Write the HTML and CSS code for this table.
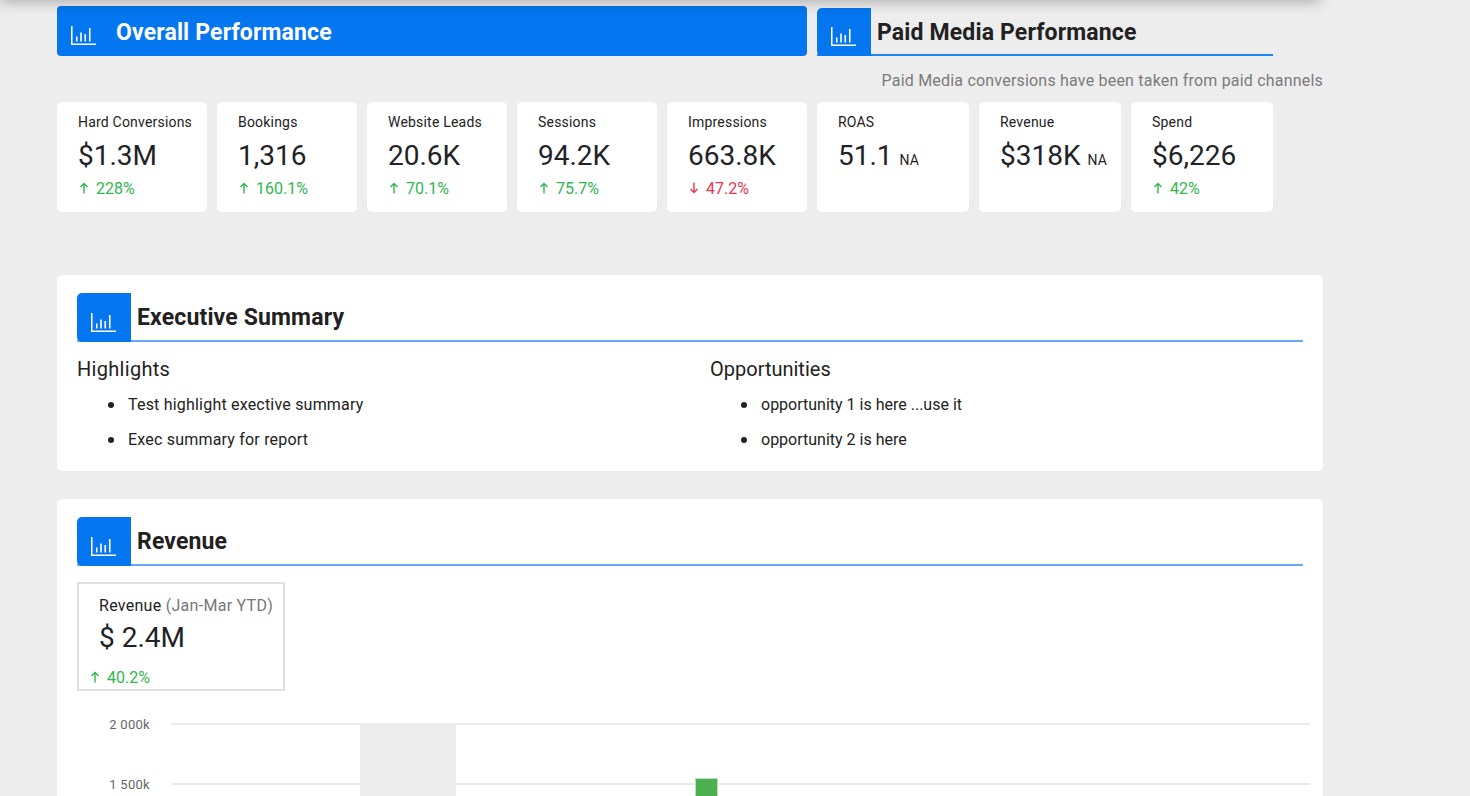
FILE: index.html
```html
<!DOCTYPE html>
<html lang="en">
<head>
<meta charset="utf-8">
<title>Performance Report</title>
<link rel="stylesheet" href="styles.css">
</head>
<body>
<div class="top-shadow"></div>
<main class="page">
  <section class="top-row">
    <div class="col overall">
      <div class="banner">
        <svg class="chart-icon" viewBox="0 0 25 19" width="25" height="19"><path d="M0.75 0v18.25H25M5.75 15.5V10.5M10 15.5V6.5M14.25 15.5V8M18.75 15.5V2" fill="none" stroke="currentColor" stroke-width="1.6"/></svg>
        <h2 class="banner-title">Overall Performance</h2>
      </div>
      <div class="kpis kpis-overall">
        <div class="kpi">
          <div class="kpi-label">Hard Conversions</div>
          <div class="kpi-value">$1.3M</div>
          <div class="kpi-change up"><svg class="arrow" viewBox="0 0 10 12" width="10" height="12"><path d="M5 11.5V1.5M1.5 5L5 1.5 8.5 5" fill="none" stroke="currentColor" stroke-width="1.4"/></svg>228%</div>
        </div>
        <div class="kpi">
          <div class="kpi-label">Bookings</div>
          <div class="kpi-value">1,316</div>
          <div class="kpi-change up"><svg class="arrow" viewBox="0 0 10 12" width="10" height="12"><path d="M5 11.5V1.5M1.5 5L5 1.5 8.5 5" fill="none" stroke="currentColor" stroke-width="1.4"/></svg>160.1%</div>
        </div>
        <div class="kpi">
          <div class="kpi-label">Website Leads</div>
          <div class="kpi-value">20.6K</div>
          <div class="kpi-change up"><svg class="arrow" viewBox="0 0 10 12" width="10" height="12"><path d="M5 11.5V1.5M1.5 5L5 1.5 8.5 5" fill="none" stroke="currentColor" stroke-width="1.4"/></svg>70.1%</div>
        </div>
        <div class="kpi">
          <div class="kpi-label">Sessions</div>
          <div class="kpi-value">94.2K</div>
          <div class="kpi-change up"><svg class="arrow" viewBox="0 0 10 12" width="10" height="12"><path d="M5 11.5V1.5M1.5 5L5 1.5 8.5 5" fill="none" stroke="currentColor" stroke-width="1.4"/></svg>75.7%</div>
        </div>
        <div class="kpi">
          <div class="kpi-label">Impressions</div>
          <div class="kpi-value">663.8K</div>
          <div class="kpi-change down"><svg class="arrow" viewBox="0 0 10 12" width="10" height="12"><path d="M5 0.5V10.5M1.5 7L5 10.5 8.5 7" fill="none" stroke="currentColor" stroke-width="1.4"/></svg>47.2%</div>
        </div>
      </div>
    </div>
    <div class="col paid">
      <div class="sec-head sec-head-paid">
        <div class="icon-box"><svg class="chart-icon" viewBox="0 0 25 19" width="25" height="19"><path d="M0.75 0v18.25H25M5.75 15.5V10.5M10 15.5V6.5M14.25 15.5V8M18.75 15.5V2" fill="none" stroke="currentColor" stroke-width="1.6"/></svg></div>
        <h2 class="sec-title">Paid Media Performance</h2>
      </div>
      <p class="note">Paid Media conversions have been taken from paid channels</p>
      <div class="kpis kpis-paid">
        <div class="kpi">
          <div class="kpi-label">ROAS</div>
          <div class="kpi-value">51.1<span class="na">NA</span></div>
        </div>
        <div class="kpi">
          <div class="kpi-label">Revenue</div>
          <div class="kpi-value">$318K<span class="na">NA</span></div>
        </div>
        <div class="kpi">
          <div class="kpi-label">Spend</div>
          <div class="kpi-value">$6,226</div>
          <div class="kpi-change up"><svg class="arrow" viewBox="0 0 10 12" width="10" height="12"><path d="M5 11.5V1.5M1.5 5L5 1.5 8.5 5" fill="none" stroke="currentColor" stroke-width="1.4"/></svg>42%</div>
        </div>
      </div>
    </div>
  </section>

  <section class="panel summary">
    <div class="sec-head">
      <div class="icon-box"><svg class="chart-icon" viewBox="0 0 25 19" width="25" height="19"><path d="M0.75 0v18.25H25M5.75 15.5V10.5M10 15.5V6.5M14.25 15.5V8M18.75 15.5V2" fill="none" stroke="currentColor" stroke-width="1.6"/></svg></div>
      <h2 class="sec-title">Executive Summary</h2>
    </div>
    <div class="summary-cols">
      <div class="summary-col">
        <h3 class="summary-heading">Highlights</h3>
        <ul class="summary-list">
          <li>Test highlight exective summary</li>
          <li>Exec summary for report</li>
        </ul>
      </div>
      <div class="summary-col opps">
        <h3 class="summary-heading">Opportunities</h3>
        <ul class="summary-list">
          <li>opportunity 1 is here ...use it</li>
          <li>opportunity 2 is here</li>
        </ul>
      </div>
    </div>
  </section>

  <section class="panel revenue">
    <div class="sec-head">
      <div class="icon-box"><svg class="chart-icon" viewBox="0 0 25 19" width="25" height="19"><path d="M0.75 0v18.25H25M5.75 15.5V10.5M10 15.5V6.5M14.25 15.5V8M18.75 15.5V2" fill="none" stroke="currentColor" stroke-width="1.6"/></svg></div>
      <h2 class="sec-title">Revenue</h2>
    </div>
    <div class="rev-box">
      <div class="rev-label">Revenue <span class="muted">(Jan-Mar YTD)</span></div>
      <div class="rev-value">$ 2.4M</div>
      <div class="kpi-change up rev-change"><svg class="arrow" viewBox="0 0 10 12" width="10" height="12"><path d="M5 11.5V1.5M1.5 5L5 1.5 8.5 5" fill="none" stroke="currentColor" stroke-width="1.4"/></svg>40.2%</div>
    </div>
    <svg class="rev-chart" viewBox="0 0 1240 140" width="1240" height="140">
      <rect x="283" y="24" width="96" height="116" fill="#ececec"/>
      <line x1="94" y1="24" x2="1233" y2="24" stroke="#ebebeb" stroke-width="2"/>
      <line x1="94" y1="84" x2="1233" y2="84" stroke="#ebebeb" stroke-width="2"/>
      <text class="axis-label" x="73" y="29" text-anchor="end">2 000k</text>
      <text class="axis-label" x="73" y="89" text-anchor="end">1 500k</text>
      <rect x="618.5" y="78.5" width="22" height="70" fill="#4caf50" stroke="#b9e0bb" stroke-width="1"/>
    </svg>
  </section>
</main>
</body>
</html>
```

FILE: styles.css
```css
html, body {
  margin: 0;
  padding: 0;
  overflow: hidden;
}

body {
  background: #ededed;
  font-family: Roboto, "Liberation Sans", Arial, sans-serif;
  color: #212529;
}

.top-shadow {
  position: fixed;
  top: -40px;
  left: 0;
  width: 1320px;
  height: 40px;
  box-shadow: 0 2px 14px rgba(0, 0, 0, 0.28);
  background: #ededed;
}

.page {
  width: 1266px;
  margin-left: 57px;
  padding-top: 6px;
}

.top-row {
  display: grid;
  grid-template-columns: 750px 506px;
  column-gap: 10px;
  align-items: start;
}

.col {
  display: flex;
  flex-direction: column;
}

.banner {
  height: 50px;
  background: #0476ef;
  border-radius: 4px;
  display: flex;
  align-items: center;
  padding-left: 14px;
  color: #fff;
}

.banner .chart-icon {
  margin-top: 9px;
}

.banner-title {
  margin: 0 0 0 20px;
  padding-top: 3px;
  font-size: 23px;
  letter-spacing: 0.15px;
  font-weight: 700;
  color: #fff;
}

.chart-icon {
  display: block;
  color: #fff;
  flex: none;
}

.kpis {
  display: grid;
  column-gap: 10px;
}

.kpis-overall {
  margin-top: 46px;
  grid-template-columns: 150px repeat(4, 140px);
}

.kpis-paid {
  margin-top: 9px;
  width: 456px;
  grid-template-columns: 152px 142px 142px;
}

.kpi {
  background: #fff;
  border-radius: 5px;
  height: 110px;
  box-sizing: border-box;
  padding: 12px 8px 0 21px;
}

.kpi-label {
  font-size: 14px;
  line-height: 17px;
  letter-spacing: 0.2px;
  color: #222;
  white-space: nowrap;
}

.kpi-value {
  margin-top: 8px;
  font-size: 28px;
  line-height: 34px;
  color: #1f2328;
  white-space: nowrap;
}

.na {
  font-size: 14px;
  margin-left: 7px;
}

.kpi-change {
  margin-top: 6px;
  font-size: 16px;
  line-height: 20px;
  display: flex;
  align-items: center;
}

.kpi-change .arrow {
  display: block;
  margin: 0 7px 2px 1px;
}

.up { color: #2eb84e; }
.down { color: #e8364f; }

.paid {
  padding-top: 2px;
}

.sec-head {
  display: flex;
  align-items: center;
  border-bottom: 2px solid #6aaaf3;
  height: 47px;
}

.sec-head-paid {
  width: 456px;
  border-bottom: 2px solid #1c83f4;
  height: 46px;
}

.icon-box {
  width: 54px;
  align-self: stretch;
  margin-bottom: -2px;
  background: #0476ef;
  border-radius: 5px 0 0 5px;
  display: flex;
  justify-content: center;
  align-items: center;
  flex: none;
}

.icon-box .chart-icon {
  margin-top: 9px;
  margin-left: -1px;
}

.sec-title {
  margin: 0 0 0 6px;
  padding-top: 2px;
  font-size: 23px;
  letter-spacing: 0.15px;
  font-weight: 700;
  color: #212121;
}

.note {
  margin: 13px 0 0;
  font-size: 16px;
  line-height: 24px;
  letter-spacing: 0.2px;
  color: #7b7b7b;
  text-align: right;
}

.panel {
  background: #fff;
  border-radius: 5px;
  padding: 18px 20px 20px;
}

.summary {
  margin-top: 63px;
  padding-bottom: 21px;
}

.summary-cols {
  display: grid;
  grid-template-columns: 1fr 1fr;
  column-gap: 40px;
}

.summary-heading {
  margin: 15px 0 0;
  font-size: 20px;
  line-height: 24px;
  letter-spacing: 0.3px;
  font-weight: 400;
  color: #222;
}

.summary-list {
  margin: 14px 0 0;
  padding-left: 31px;
  list-style: none;
  font-size: 16px;
  line-height: 20px;
  letter-spacing: 0.2px;
  color: #222;
}

.opps .summary-heading,
.opps .summary-list {
  letter-spacing: 0;
}

.summary-list li {
  display: flex;
  align-items: center;
}

.summary-list li::before {
  content: "";
  width: 6px;
  height: 6px;
  border-radius: 50%;
  background: #222;
  margin-right: 14px;
  flex: none;
}

.summary-list li + li {
  margin-top: 15px;
}

.revenue {
  margin-top: 28px;
  padding-bottom: 0;
}

.rev-box {
  margin-top: 16px;
  width: 208px;
  height: 109px;
  box-sizing: border-box;
  border: 2px solid #e1e1e1;
  padding: 12px 0 0 20px;
}

.rev-label {
  font-size: 16px;
  line-height: 20px;
  letter-spacing: 0.28px;
  color: #222;
  white-space: nowrap;
}

.muted {
  color: #777;
}

.rev-value {
  margin-top: 5px;
  font-size: 28px;
  line-height: 34px;
  color: #1f2328;
}

.rev-change {
  margin-top: 13px;
  margin-left: -10px;
}

.rev-chart {
  display: block;
  margin-top: 9px;
}

.axis-label {
  font-family: Roboto, "Liberation Sans", Arial, sans-serif;
  font-size: 13px;
  letter-spacing: 0.3px;
  fill: #666;
}
```
